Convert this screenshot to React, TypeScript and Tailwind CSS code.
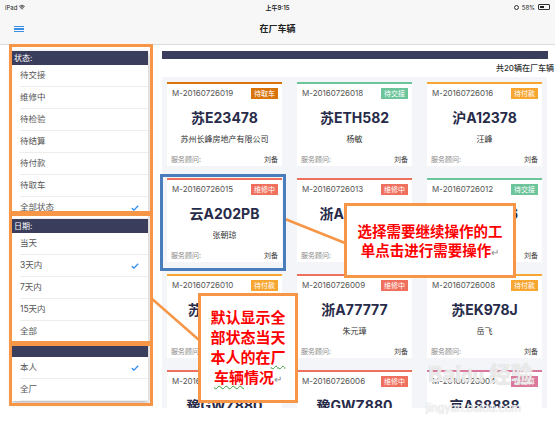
import { Wifi } from "lucide-react";

type Status = "待取车" | "待交接" | "待付款" | "维修中" | "待结算";

const STATUS: Record<Status, { bar: string; badge: string }> = {
  待取车: { bar: "border-[#d9740a]", badge: "bg-[#d9740a]" },
  待交接: { bar: "border-[#6cc49b]", badge: "bg-[#6cc49b]" },
  待付款: { bar: "border-[#f7a632]", badge: "bg-[#f7a632]" },
  维修中: { bar: "border-[#f0705e]", badge: "bg-[#f0705e]" },
  待结算: { bar: "border-[#d9789b]", badge: "bg-[#d9789b]" },
};

type Order = { no: string; status: Status; plate: string; owner: string };

const orders: Order[] = [
  { no: "M-20160726019", status: "待取车", plate: "苏E23478", owner: "苏州长峰房地产有限公司" },
  { no: "M-20160726018", status: "待交接", plate: "苏ETH582", owner: "杨敏" },
  { no: "M-20160726016", status: "待付款", plate: "沪A12378", owner: "汪峰" },
  { no: "M-20160726015", status: "维修中", plate: "云A202PB", owner: "张朝琼" },
  { no: "M-20160726013", status: "维修中", plate: "浙A66666", owner: "李白" },
  { no: "M-20160726012", status: "待交接", plate: "苏E88F86", owner: "王强" },
  { no: "M-20160726010", status: "待付款", plate: "苏EW6698", owner: "刘洋" },
  { no: "M-20160726009", status: "维修中", plate: "浙A77777", owner: "朱元璋" },
  { no: "M-20160726008", status: "待付款", plate: "苏EK978J", owner: "岳飞" },
  { no: "M-20160726007", status: "维修中", plate: "豫GWZ880", owner: "张飞" },
  { no: "M-20160726006", status: "维修中", plate: "豫GWZ880", owner: "关羽" },
  { no: "M-20160726004", status: "待结算", plate: "京A88888", owner: "赵云" },
];

const filters = [
  { title: "状态:", items: ["待交接", "维修中", "待检验", "待结算", "待付款", "待取车", "全部状态"], checked: 6 },
  { title: "日期:", items: ["当天", "3天内", "7天内", "15天内", "全部"], checked: 1 },
  { title: "", items: ["本人", "全厂"], checked: 0 },
];

function Check() {
  return (
    <svg width="8" height="6" viewBox="0 0 8 6" fill="none">
      <path d="M0.8 3.2 L2.9 5.1 L7.2 0.8" stroke="#2f8cf0" strokeWidth="1.3" />
    </svg>
  );
}

function Card({ o }: { o: Order }) {
  const s = STATUS[o.status];
  return (
    <div className={`flex h-[84px] flex-col border-t-2 bg-white px-[4px] ${s.bar}`}>
      <div className="mt-[2px] flex h-[14px] items-center justify-between">
        <span className="pl-[1px] text-[8px] text-[#555]">{o.no}</span>
        <span className={`h-[11px] px-[3px] text-[7px] leading-[11px] text-white ${s.badge}`}>
          {o.status}
        </span>
      </div>
      <div className="mt-[7px] h-[22px] text-center text-[14px] font-bold leading-[22px] text-[#272b49]">
        {o.plate}
      </div>
      <div className="mt-[4px] h-[12px] text-center text-[8px] leading-[12px] text-[#333]">
        {o.owner}
      </div>
      <div className="mt-auto flex h-[10px] items-center justify-between pb-[2px] text-[7px] leading-[10px]">
        <span className="text-[#888]">服务顾问:</span>
        <span className="text-[#444]">刘备</span>
      </div>
    </div>
  );
}

export default function App() {
  return (
    <div className="relative h-[433px] w-[555px] overflow-hidden bg-white font-['Inter','Noto_Sans_CJK_SC',sans-serif]">
      {/* Status bar */}
      <div className="grid h-[14px] grid-cols-3 items-center bg-[#f7f7f7] px-[5px] text-[6px] text-[#222]">
        <div className="flex items-center gap-[2px]">
          <span>iPad</span>
          <Wifi className="h-[6px] w-[6px]" strokeWidth={3} />
        </div>
        <div className="text-center font-semibold">上午9:15</div>
        <div className="flex items-center justify-end gap-[3px]">
          <span className="h-[5px] w-[5px] rounded-full border border-[#333]" />
          <span>58%</span>
          <span className="flex h-[6px] w-[12px] items-center rounded-[1px] border border-[#333] p-[1px]">
            <span className="h-full w-[55%] bg-[#222]" />
          </span>
        </div>
      </div>

      {/* Nav bar */}
      <div className="flex h-[31px] items-center border-b border-[#dcdcdc] bg-[#f7f7f7] pl-[14px]">
        <div className="flex w-[10px] flex-col gap-[1.5px]">
          <span className="h-[1.2px] bg-[#3a8ee6]" />
          <span className="h-[1.2px] bg-[#3a8ee6]" />
          <span className="h-[1.2px] bg-[#3a8ee6]" />
        </div>
        <div className="flex-1 pr-[24px] text-center text-[9px] font-bold text-[#222]">在厂车辆</div>
      </div>

      <div className="flex">
        {/* Filter panel */}
        <aside className="ml-[12px] mt-[6px] w-[136px] self-start bg-white shadow-[0_2px_5px_rgba(0,0,0,0.3)]">
          {filters.map((f, i) => (
            <div key={i}>
              <div className="h-[14px] bg-[#3a3d5c] px-[2px] text-[8px] leading-[14px] text-white">{f.title}</div>
              {f.items.map((it, j) => (
                <div
                  key={it}
                  className="ml-[8px] flex h-[22px] items-center justify-between border-b border-[#ededed] pr-[9px] text-[8.5px] text-[#555]"
                >
                  <span>{it}</span>
                  {j === f.checked && <Check />}
                </div>
              ))}
            </div>
          ))}
        </aside>

        {/* Main */}
        <main className="ml-[14px] mt-[6px] w-[386px]">
          <div className="h-[8px] bg-[#3a3d5c]" />
          <div className="-mr-[6px] flex h-[18px] items-center justify-end text-[8px] font-medium text-[#333]">
            共20辆在厂车辆
          </div>
          <div className="grid h-[331px] w-[385px] grid-cols-[115px_115px_115px] content-start gap-x-[15px] gap-y-[12px] overflow-hidden bg-[#f3f5f9] p-[5px]">
            {orders.map((o) => (
              <Card key={o.no} o={o} />
            ))}
          </div>
        </main>
      </div>

      {/* Watermark */}
      <div className="pointer-events-none absolute left-[428px] top-[362px] text-[22px] font-bold leading-[24px] text-white/70 [text-shadow:0_0_1px_#bbb]">
        Bai<span className="text-[18px]">du</span> 经验
      </div>
      <div className="pointer-events-none absolute left-[426px] top-[402px] text-[11px] leading-[12px] text-white/80 [text-shadow:0_0_1px_#bbb]">
        jingyan.baidu.com
      </div>

      {/* Annotations */}
      <svg className="pointer-events-none absolute left-0 top-0" width="555" height="433">
        <line x1="285" y1="219" x2="345" y2="243" stroke="#f79646" strokeWidth="2.5" />
        <line x1="151" y1="298" x2="199" y2="340" stroke="#f79646" strokeWidth="2.5" />
      </svg>
      <div className="pointer-events-none absolute left-[9px] top-[44px] h-[170px] w-[144px] border-[3px] border-[#f79646]" />
      <div className="pointer-events-none absolute left-[9px] top-[213px] h-[131px] w-[144px] border-[3px] border-[#f79646]" />
      <div className="pointer-events-none absolute left-[9px] top-[343px] h-[63px] w-[144px] border-[3px] border-[#f79646]" />
      <div className="pointer-events-none absolute left-[160px] top-[174px] h-[97px] w-[126px] border-[3px] border-[#4a7dbb]" />

      <div className="absolute left-[344px] top-[203px] flex h-[75px] w-[172px] items-center justify-center border-[3px] border-[#f79646] bg-white text-center font-['Noto_Sans_CJK_SC',sans-serif] text-[14.5px] font-bold leading-[19px] text-[#ff0000]">
        <div>
          选择需要继续操作的工
          <br />
          单点击进行需要操作<span className="text-[10px] font-normal text-[#888]">↵</span>
        </div>
      </div>

      <div className="absolute left-[198px] top-[293px] flex h-[110px] w-[100px] items-center justify-center border-[3px] border-[#f79646] bg-white text-center font-['Noto_Sans_CJK_SC',sans-serif] text-[15px] font-bold leading-[20px] text-[#ff0000]">
        <div>
          默认显示全
          <br />
          部状态当天
          <br />
          本人的在<span className="underline decoration-[#3a9a3a] decoration-wavy decoration-1 underline-offset-2">厂</span>
          <br />
          <span className="underline decoration-[#3a9a3a] decoration-wavy decoration-1 underline-offset-2">车辆</span>情况
          <span className="text-[10px] font-normal text-[#888]">↵</span>
        </div>
      </div>
    </div>
  );
}
